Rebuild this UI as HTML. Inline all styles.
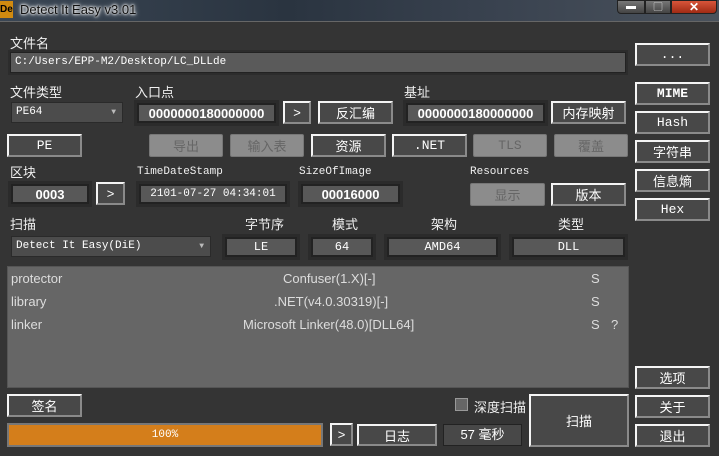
<!DOCTYPE html>
<html><head><meta charset="utf-8"><style>
*{box-sizing:border-box;margin:0;padding:0}
body{width:719px;height:456px;background:#343434;position:relative;overflow:hidden;font-family:"Liberation Sans","Noto Sans CJK SC",sans-serif;color:#eee;font-size:13px}
.a{position:absolute}
.lbl{position:absolute;font-size:13px;color:#f0f0f0;white-space:nowrap}
.mono{font-family:"Liberation Mono","Noto Sans CJK SC",monospace;font-size:11px}
.btn{position:absolute;background:#484848;border:2px solid;border-color:#f4f4f4 #8a8a8a #8a8a8a #f4f4f4;color:#fff;display:flex;align-items:center;justify-content:center;font-size:13px;white-space:nowrap}
.dis{position:absolute;background:#8c8c8c;border:1px solid #777;border-radius:2px;color:#666;display:flex;align-items:center;justify-content:center;font-size:13px}
.fld{position:absolute;background:#585858;border:2px solid #222;outline:3px solid #2b2b2b;color:#fff;display:flex;align-items:center;justify-content:center;font-size:12px;white-space:nowrap}
.b{font-weight:bold;font-size:13px}
</style></head><body>
<div class="a" style="left:0;top:0;width:719px;height:22px;background:linear-gradient(90deg,#3a4654,#2a3440 40%,#3a4350 70%,#4a525c);border-bottom:1px solid #666"></div>
<div class="a" style="left:0;top:1px;width:13px;height:17px;background:#d08a10;color:#000;font-size:10px;font-weight:bold;line-height:17px">De</div>
<div class="lbl" style="left:20px;top:2px;font-size:13px;color:#111;text-shadow:0 0 6px #fff,0 0 3px #fff,0 0 2px #fff">Detect It Easy v3.01</div>
<div class="a" style="left:617px;top:0;width:28px;height:14px;background:linear-gradient(#777,#444);border:1px solid #222;border-radius:0 0 0 4px;color:#fff;text-align:center;font-size:10px;line-height:12px">▬</div>
<div class="a" style="left:645px;top:0;width:26px;height:14px;background:linear-gradient(#777,#444);border:1px solid #222;color:#fff;text-align:center;font-size:9px;line-height:12px">▢</div>
<div class="a" style="left:671px;top:0;width:46px;height:14px;background:linear-gradient(#d8553a,#a02a14);border:1px solid #222;border-radius:0 0 4px 0;color:#fff;text-align:center;font-size:12px;font-weight:bold;line-height:12px">✕</div>

<div class="lbl" style="left:10px;top:33px">文件名</div>
<div class="a mono" style="left:10px;top:52px;width:616px;height:21px;background:#5a5a5a;border:1px solid #222;outline:2px solid #2c2c2c;color:#fff;padding-left:4px;line-height:19px">C:/Users/EPP-M2/Desktop/LC_DLLde</div>
<div class="btn mono" style="left:635px;top:43px;width:75px;height:23px">...</div>

<div class="lbl" style="left:10px;top:82px">文件类型</div>
<div class="a mono" style="left:11px;top:102px;width:112px;height:21px;background:#4c4c4c;border:1px solid #2a2a2a;color:#fff;padding-left:4px;line-height:19px">PE64<span style="position:absolute;right:6px;color:#bbb;font-size:8px">▼</span></div>
<div class="lbl" style="left:135px;top:82px">入口点</div>
<div class="fld b" style="left:137px;top:103px;width:139px;height:20px">0000000180000000</div>
<div class="btn" style="left:283px;top:101px;width:28px;height:23px">&gt;</div>
<div class="btn" style="left:318px;top:101px;width:75px;height:23px">反汇编</div>
<div class="lbl" style="left:404px;top:82px">基址</div>
<div class="fld b" style="left:406px;top:103px;width:139px;height:20px">0000000180000000</div>
<div class="btn" style="left:551px;top:101px;width:75px;height:23px">内存映射</div>
<div class="btn mono" style="left:635px;top:82px;width:75px;height:23px;font-weight:bold">MIME</div>
<div class="btn mono" style="left:635px;top:111px;width:75px;height:23px">Hash</div>
<div class="btn" style="left:635px;top:140px;width:75px;height:23px">字符串</div>
<div class="btn" style="left:635px;top:169px;width:75px;height:23px">信息熵</div>
<div class="btn mono" style="left:635px;top:198px;width:75px;height:23px">Hex</div>

<div class="btn mono" style="left:7px;top:134px;width:75px;height:23px">PE</div>
<div class="dis" style="left:149px;top:134px;width:74px;height:23px">导出</div>
<div class="dis" style="left:230px;top:134px;width:74px;height:23px">输入表</div>
<div class="btn" style="left:311px;top:134px;width:75px;height:23px">资源</div>
<div class="btn mono" style="left:392px;top:134px;width:75px;height:23px">.NET</div>
<div class="dis mono" style="left:473px;top:134px;width:74px;height:23px">TLS</div>
<div class="dis" style="left:554px;top:134px;width:74px;height:23px">覆盖</div>

<div class="lbl" style="left:10px;top:162px">区块</div>
<div class="fld b" style="left:11px;top:184px;width:78px;height:20px">0003</div>
<div class="btn" style="left:96px;top:182px;width:29px;height:23px">&gt;</div>
<div class="lbl mono" style="left:137px;top:166px">TimeDateStamp</div>
<div class="fld mono" style="left:139px;top:184px;width:148px;height:20px;font-size:11px">2101-07-27 04:34:01</div>
<div class="lbl mono" style="left:299px;top:166px">SizeOfImage</div>
<div class="fld b" style="left:301px;top:184px;width:99px;height:20px">00016000</div>
<div class="lbl mono" style="left:470px;top:166px">Resources</div>
<div class="dis" style="left:470px;top:183px;width:75px;height:23px">显示</div>
<div class="btn" style="left:551px;top:183px;width:75px;height:23px">版本</div>

<div class="lbl" style="left:10px;top:214px">扫描</div>
<div class="a mono" style="left:11px;top:236px;width:200px;height:21px;background:#4c4c4c;border:1px solid #2a2a2a;color:#fff;padding-left:4px;line-height:19px">Detect It Easy(DiE)<span style="position:absolute;right:6px;color:#bbb;font-size:8px">▼</span></div>
<div class="lbl" style="left:245px;top:214px">字节序</div>
<div class="fld mono" style="left:225px;top:237px;width:72px;height:20px">LE</div>
<div class="lbl" style="left:332px;top:214px">模式</div>
<div class="fld mono" style="left:311px;top:237px;width:62px;height:20px">64</div>
<div class="lbl" style="left:431px;top:214px">架构</div>
<div class="fld mono" style="left:387px;top:237px;width:111px;height:20px">AMD64</div>
<div class="lbl" style="left:558px;top:214px">类型</div>
<div class="fld mono" style="left:512px;top:237px;width:113px;height:20px">DLL</div>

<div class="a" style="left:7px;top:266px;width:622px;height:122px;background:#666;border:1px solid #555"></div>
<div class="lbl" style="left:11px;top:271px;color:#ddd">protector</div>
<div class="lbl" style="left:283px;top:271px;color:#ddd">Confuser(1.X)[-]</div>
<div class="lbl" style="left:591px;top:271px;color:#ddd">S</div>
<div class="lbl" style="left:11px;top:294px;color:#ddd">library</div>
<div class="lbl" style="left:274px;top:294px;color:#ddd">.NET(v4.0.30319)[-]</div>
<div class="lbl" style="left:591px;top:294px;color:#ddd">S</div>
<div class="lbl" style="left:11px;top:317px;color:#ddd">linker</div>
<div class="lbl" style="left:243px;top:317px;color:#ddd">Microsoft Linker(48.0)[DLL64]</div>
<div class="lbl" style="left:591px;top:317px;color:#ddd">S</div>
<div class="lbl" style="left:611px;top:317px;color:#ddd">?</div>

<div class="btn" style="left:635px;top:366px;width:75px;height:23px">选项</div>
<div class="btn" style="left:635px;top:395px;width:75px;height:23px">关于</div>
<div class="btn" style="left:635px;top:424px;width:75px;height:23px">退出</div>

<div class="btn" style="left:7px;top:394px;width:75px;height:23px">签名</div>
<div class="a" style="left:455px;top:398px;width:13px;height:13px;background:#666;border:1px solid #999"></div>
<div class="lbl" style="left:474px;top:397px">深度扫描</div>
<div class="btn" style="left:529px;top:394px;width:100px;height:53px">扫描</div>
<div class="a mono" style="left:7px;top:423px;width:316px;height:24px;background:#d47e1b;border:2px solid #777;color:#fff;text-align:center;line-height:20px">100%</div>
<div class="btn" style="left:330px;top:423px;width:23px;height:23px">&gt;</div>
<div class="btn" style="left:357px;top:424px;width:80px;height:22px">日志</div>
<div class="a" style="left:443px;top:424px;width:79px;height:22px;background:#484848;border:1px solid #222;color:#fff;text-align:center;line-height:20px">57 毫秒</div>
</body></html>
